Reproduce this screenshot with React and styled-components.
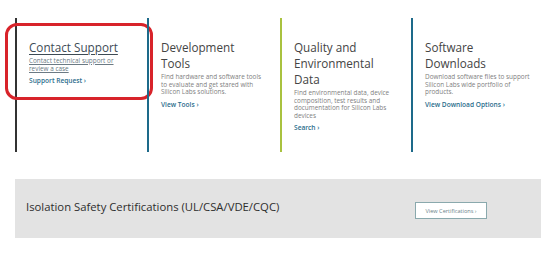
import React from 'react';
import styled, { createGlobalStyle } from 'styled-components';

const GlobalStyle = createGlobalStyle`
  body {
    margin: 0;
    background: #ffffff;
    font-family: 'Open Sans', 'Liberation Sans', sans-serif;
  }
`;

const Page = styled.div`
  width: 554px;
  height: 270px;
  padding-top: 18px;
  box-sizing: border-box;
`;

const Columns = styled.div`
  display: grid;
  grid-template-columns: 132px 133px 131px 132px;
  margin-left: 15px;
`;

const Column = styled.div`
  position: relative;
  height: 134px;
  border-left: 2px solid ${(p) => p.$line};
  padding: 21px 4px 0 12px;
  box-sizing: border-box;
`;

const Highlight = styled.div`
  position: absolute;
  left: -12px;
  top: 5px;
  width: 148px;
  height: 77px;
  border: 3px solid #d8232a;
  border-radius: 12px;
  box-sizing: border-box;
  pointer-events: none;
`;

const Heading = styled.h3`
  margin: 0 0 2px;
  font-size: 11.7px;
  line-height: 16px;
  font-weight: 400;
  color: ${(p) => (p.$link ? '#3d4b55' : '#444444')};
  text-decoration: ${(p) => (p.$link ? 'underline' : 'none')};
  text-underline-offset: 2px;
  text-decoration-thickness: 1px;
`;

const Desc = styled.p`
  margin: 0 0 4px;
  font-size: 6.4px;
  line-height: 7.5px;
  color: ${(p) => (p.$link ? '#6b7a84' : '#808080')};
  text-decoration: ${(p) => (p.$link ? 'underline' : 'none')};
`;

const More = styled.a`
  display: block;
  font-size: 6.6px;
  line-height: 9px;
  font-weight: 600;
  color: #2b6d8c;
  text-decoration: none;
`;

const CertBar = styled.div`
  display: flex;
  align-items: center;
  justify-content: space-between;
  width: 526px;
  height: 59px;
  margin: 27px 0 0 15px;
  padding: 0 54px 0 11px;
  box-sizing: border-box;
  background: #e3e3e3;
`;

const CertTitle = styled.div`
  font-size: 11.3px;
  color: #2e2e2e;
  margin-top: -4px;
`;

const CertButton = styled.button`
  width: 72px;
  height: 17px;
  margin-top: 4px;
  padding: 0;
  background: #ffffff;
  border: 1px solid #8aa9ad;
  font-family: 'Open Sans', 'Liberation Sans', sans-serif;
  font-size: 5.6px;
  color: #6a7f88;
`;

const columns = [
  {
    line: '#333333',
    title: ['Contact Support'],
    desc: ['Contact technical support or', 'review a case'],
    more: 'Support Request',
    link: true,
  },
  {
    line: '#1d6a8a',
    title: ['Development', 'Tools'],
    desc: ['Find hardware and software tools', 'to evaluate and get stared with', 'Silicon Labs solutions.'],
    more: 'View Tools',
  },
  {
    line: '#a9c23f',
    title: ['Quality and', 'Environmental', 'Data'],
    desc: ['Find environmental data, device', 'composition, test results and', 'documentation for Silicon Labs', 'devices'],
    more: 'Search',
  },
  {
    line: '#1d6a8a',
    title: ['Software', 'Downloads'],
    desc: ['Download software files to support', 'Silicon Labs wide portfolio of', 'products.'],
    more: 'View Download Options',
  },
];

const App = () => {
  return (
    <>
      <GlobalStyle />
      <Page>
        <Columns>
          {columns.map((col, i) => (
            <Column key={i} $line={col.line}>
              {col.link && <Highlight />}
              <Heading $link={col.link}>
                {col.title.map((t, j) => (
                  <React.Fragment key={j}>
                    {j > 0 && <br />}
                    {t}
                  </React.Fragment>
                ))}
              </Heading>
              <Desc $link={col.link}>
                {col.desc.map((t, j) => (
                  <React.Fragment key={j}>
                    {j > 0 && <br />}
                    {t}
                  </React.Fragment>
                ))}
              </Desc>
              <More href='#'>{col.more} ›</More>
            </Column>
          ))}
        </Columns>
        <CertBar>
          <CertTitle>Isolation Safety Certifications (UL/CSA/VDE/CQC)</CertTitle>
          <CertButton>View Certifications ›</CertButton>
        </CertBar>
      </Page>
    </>
  );
};

export default App;
